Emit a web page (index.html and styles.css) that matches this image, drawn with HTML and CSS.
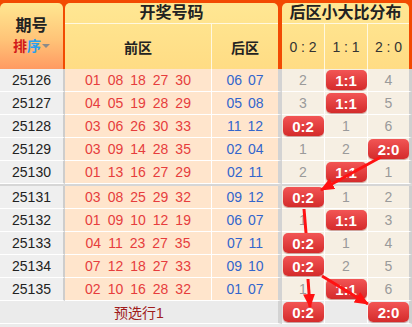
FILE: index.html
```html
<!DOCTYPE html>
<html lang="zh">
<head>
<meta charset="utf-8">
<link rel="stylesheet" href="styles.css">
</head>
<body>
<div class="board">
  <div class="head">
    <div class="panel p-issue">
      <div class="h-title">期号</div>
      <div class="h-sort"><span class="s-red">排</span><span class="s-blue">序</span><i class="tri"></i></div>
    </div>
    <div class="panel p-draw">
      <div class="h-top">开奖号码</div>
      <div class="h-sub">
        <div class="sub-front">前区</div>
        <div class="sub-back">后区</div>
      </div>
    </div>
    <div class="panel p-dist">
      <div class="h-top">后区小大比分布</div>
      <div class="h-sub3">
        <div>0 : 2</div>
        <div>1 : 1</div>
        <div>2 : 0</div>
      </div>
    </div>
  </div>

  <div class="row">
    <div class="c-issue">25126</div>
    <div class="c-front"><span>01</span><span>08</span><span>18</span><span>27</span><span>30</span></div>
    <div class="c-back"><span>06</span><span>07</span></div>
    <div class="c-d">2</div><div class="c-d"><b class="badge">1:1</b></div><div class="c-d c-last">4</div>
  </div>
  <div class="row">
    <div class="c-issue">25127</div>
    <div class="c-front"><span>04</span><span>05</span><span>19</span><span>28</span><span>29</span></div>
    <div class="c-back"><span>05</span><span>08</span></div>
    <div class="c-d">3</div><div class="c-d"><b class="badge">1:1</b></div><div class="c-d c-last">5</div>
  </div>
  <div class="row">
    <div class="c-issue">25128</div>
    <div class="c-front"><span>03</span><span>06</span><span>26</span><span>30</span><span>33</span></div>
    <div class="c-back"><span>11</span><span>12</span></div>
    <div class="c-d"><b class="badge">0:2</b></div><div class="c-d">1</div><div class="c-d c-last">6</div>
  </div>
  <div class="row">
    <div class="c-issue">25129</div>
    <div class="c-front"><span>03</span><span>09</span><span>14</span><span>28</span><span>35</span></div>
    <div class="c-back"><span>02</span><span>04</span></div>
    <div class="c-d">1</div><div class="c-d">2</div><div class="c-d c-last"><b class="badge">2:0</b></div>
  </div>
  <div class="row">
    <div class="c-issue">25130</div>
    <div class="c-front"><span>01</span><span>13</span><span>16</span><span>27</span><span>29</span></div>
    <div class="c-back"><span>02</span><span>11</span></div>
    <div class="c-d">2</div><div class="c-d"><b class="badge">1:1</b></div><div class="c-d c-last">1</div>
  </div>

  <div class="sep"></div>

  <div class="row">
    <div class="c-issue">25131</div>
    <div class="c-front"><span>03</span><span>08</span><span>25</span><span>29</span><span>32</span></div>
    <div class="c-back"><span>09</span><span>12</span></div>
    <div class="c-d"><b class="badge">0:2</b></div><div class="c-d">1</div><div class="c-d c-last">2</div>
  </div>
  <div class="row">
    <div class="c-issue">25132</div>
    <div class="c-front"><span>01</span><span>09</span><span>10</span><span>12</span><span>19</span></div>
    <div class="c-back"><span>06</span><span>07</span></div>
    <div class="c-d">1</div><div class="c-d"><b class="badge">1:1</b></div><div class="c-d c-last">3</div>
  </div>
  <div class="row">
    <div class="c-issue">25133</div>
    <div class="c-front"><span>04</span><span>11</span><span>23</span><span>27</span><span>35</span></div>
    <div class="c-back"><span>07</span><span>11</span></div>
    <div class="c-d"><b class="badge">0:2</b></div><div class="c-d">1</div><div class="c-d c-last">4</div>
  </div>
  <div class="row">
    <div class="c-issue">25134</div>
    <div class="c-front"><span>07</span><span>12</span><span>18</span><span>27</span><span>33</span></div>
    <div class="c-back"><span>09</span><span>10</span></div>
    <div class="c-d"><b class="badge">0:2</b></div><div class="c-d">2</div><div class="c-d c-last">5</div>
  </div>
  <div class="row">
    <div class="c-issue">25135</div>
    <div class="c-front"><span>02</span><span>10</span><span>16</span><span>28</span><span>32</span></div>
    <div class="c-back"><span>01</span><span>07</span></div>
    <div class="c-d">1</div><div class="c-d"><b class="badge">1:1</b></div><div class="c-d c-last">6</div>
  </div>

  <div class="row row-foot">
    <div class="c-foot">预选行1</div>
    <div class="c-d c-fd"><b class="badge">0:2</b></div><div class="c-d c-fd"></div><div class="c-d c-fd c-last"><b class="badge">2:0</b></div>
  </div>
  <div class="filler"></div>

  <svg class="arrows" width="412" height="327" viewBox="0 0 412 327">
    <defs>
      <marker id="ah" markerUnits="userSpaceOnUse" markerWidth="14" markerHeight="12" refX="13" refY="6" orient="auto">
        <path d="M0,0 L14,6 L0,12 Z" fill="#ff1212"/>
      </marker>
    </defs>
    <line x1="381" y1="157" x2="321" y2="190" stroke="#ff1212" stroke-width="3" marker-end="url(#ah)"/>
    <line x1="304" y1="209" x2="306" y2="233" stroke="#ff1212" stroke-width="3"/>
    <line x1="308" y1="279" x2="310" y2="307" stroke="#ff1212" stroke-width="3" marker-end="url(#ah)"/>
    <line x1="322" y1="276" x2="368" y2="304" stroke="#ff1212" stroke-width="3" marker-end="url(#ah)"/>
  </svg>
</div>
</body>
</html>
```

FILE: styles.css
```css
* { box-sizing: border-box; margin: 0; padding: 0; }
html, body { width: 412px; height: 327px; overflow: hidden; }
body {
  background: #ebebeb;
  font-family: "Liberation Sans", Arial, "Noto Sans CJK SC", sans-serif;
  color: #222;
}
.board { position: relative; width: 412px; }

/* header */
.head {
  display: flex;
  background: #f24a02;
  padding: 3px 3px 0 0;
  height: 69px;
}
.panel { border-radius: 5px 5px 0 0; overflow: hidden; }
.p-issue {
  width: 63px;
  margin-right: 2px;
  background: linear-gradient(#ffe791, #ffc478 55%, #ff9a62);
  display: flex;
  flex-direction: column;
  align-items: center;
  padding-top: 13px;
}
.h-title { font-size: 16px; font-weight: bold; line-height: 20px; color: #222; }
.h-sort { font-size: 14px; font-weight: bold; line-height: 16px; margin-top: 2px; display: flex; align-items: center; }
.s-red { color: #d11a1a; }
.s-blue { color: #2aa0ec; }
.tri {
  display: inline-block;
  width: 0; height: 0;
  border-left: 4px solid transparent;
  border-right: 4px solid transparent;
  border-top: 4px solid #8a8a8a;
  margin-left: 1px;
}
.p-draw {
  width: 213px;
  margin-right: 4px;
  background: linear-gradient(#ffe793, #ffdc84);
  display: flex;
  flex-direction: column;
}
.p-dist {
  width: 127px;
  background: linear-gradient(#ffe793, #ffdc84);
  display: flex;
  flex-direction: column;
}
.h-top {
  height: 21px;
  border-bottom: 1px solid #fff8e0;
  text-align: center;
  font-size: 16px;
  font-weight: bold;
  line-height: 20px;
  color: #222;
}
.h-sub { flex: 1; display: flex; }
.sub-front, .sub-back {
  display: flex; align-items: center; justify-content: center;
  font-size: 14px; font-weight: bold; color: #222;
}
.sub-front { width: 147px; border-right: 1px solid #fff8e0; }
.sub-back { width: 66px; }
.h-sub3 { flex: 1; display: flex; }
.h-sub3 div {
  display: flex; align-items: center; justify-content: center;
  font-size: 14px; color: #333; width: 43px;
  border-right: 1px solid #fff8e0;
}
.h-sub3 div:last-child { width: 41px; border-right: 0; }

/* rows */
.row {
  display: grid;
  grid-template-columns: 65px 147px 70px 43px 43px 44px;
  height: 23px;
}
.row > div {
  border-bottom: 1px solid #fff;
  display: flex;
  align-items: center;
  justify-content: center;
  font-size: 14px;
}
.c-issue { background: #efefef; border-right: 2px solid #cdcdcd; color: #222; }
.c-front { background: #ffe5cc; border-right: 1px solid #fff; color: #e63d3d; gap: 7px; }
.c-back { background: #ffe5cc; border-right: 4px solid #d3d3d3; color: #3366cc; gap: 6px; }
.c-d { background: #f6efe3; border-right: 1px solid #fff; color: #9a9a9a; }
.c-d.c-last { border-right: 3px solid #cfcfcf; }
.badge {
  display: flex; align-items: center; justify-content: center;
  width: 41px; height: 20px;
  border-radius: 5px;
  background: linear-gradient(#f25555, #d42b2b);
  color: #fff;
  font-size: 15px;
  font-weight: bold;
  box-shadow: 0 1px 1px rgba(120, 0, 0, 0.35);
}
.sep { height: 2px; background: #d6d6d6; }

.row-foot { grid-template-columns: 282px 43px 43px 44px; }
.c-foot { background: #ebebeb; color: #a01c1c; border-right: 4px solid #d3d3d3; }
.c-d.c-fd { background: #ebebeb; }
.filler { height: 10px; background: #ebebeb; }

.arrows { position: absolute; left: 0; top: 0; pointer-events: none; }
```
